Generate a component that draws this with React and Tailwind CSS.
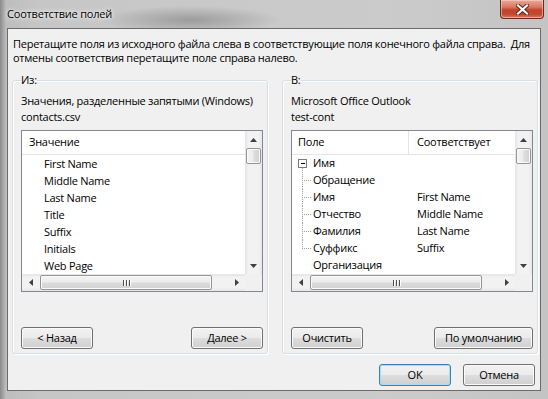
import React from "react";

function UpArrow() {
  return (
    <svg width="7" height="4" viewBox="0 0 7 4"><path d="M0 4 L3.5 0 L7 4 Z" fill="#404040" /></svg>
  );
}
function DownArrow() {
  return (
    <svg width="7" height="4" viewBox="0 0 7 4"><path d="M0 0 L3.5 4 L7 0 Z" fill="#404040" /></svg>
  );
}
function LeftArrow() {
  return (
    <svg width="4" height="7" viewBox="0 0 4 7"><path d="M4 0 L0 3.5 L4 7 Z" fill="#404040" /></svg>
  );
}
function RightArrow() {
  return (
    <svg width="4" height="7" viewBox="0 0 4 7"><path d="M0 0 L4 3.5 L0 7 Z" fill="#404040" /></svg>
  );
}

function VScroll() {
  return (
    <div className="flex flex-col bg-[linear-gradient(90deg,#e4e4e4,#f2f2f2_20%,#f2f2f2_80%,#e6e6e6)]">
      <div className="h-[17px] flex items-center justify-center"><UpArrow /></div>
      <div className="h-[16px] mx-[1px] rounded-[2px] border border-[#959595] bg-[linear-gradient(90deg,#f4f4f4,#ececec_45%,#dcdcdc_55%,#d2d2d2)] shadow-[inset_0_0_0_1px_#fafafa]" />
      <div className="flex-1" />
      <div className="h-[17px] flex items-center justify-center"><DownArrow /></div>
    </div>
  );
}

function HScroll() {
  return (
    <div className="flex bg-[linear-gradient(180deg,#e4e4e4,#f2f2f2_20%,#f2f2f2_80%,#e6e6e6)]">
      <div className="w-[17px] flex items-center justify-center"><LeftArrow /></div>
      <div className="w-[172px] my-[1px] ml-[1px] rounded-[2px] border border-[#959595] bg-[linear-gradient(180deg,#f4f4f4,#ececec_45%,#dcdcdc_55%,#d2d2d2)] shadow-[inset_0_0_0_1px_#fafafa] flex items-center justify-center gap-[2px]">
        <div className="w-[1px] h-[6px] bg-[#505050] shadow-[1px_0_0_#fff]" />
        <div className="w-[1px] h-[6px] bg-[#505050] shadow-[1px_0_0_#fff]" />
        <div className="w-[1px] h-[6px] bg-[#505050] shadow-[1px_0_0_#fff]" />
      </div>
      <div className="flex-1" />
      <div className="w-[17px] flex items-center justify-center"><RightArrow /></div>
    </div>
  );
}

function ListBox({ header, children }) {
  return (
    <div className="w-[242px] h-[162px] border border-[#828790] bg-white grid grid-cols-[1fr_17px] grid-rows-[1fr_17px] overflow-hidden">
      <div className="flex flex-col overflow-hidden min-w-0">
        <div className="h-[24px] shrink-0 flex items-center border-b border-[#e5e5e5] bg-white">{header}</div>
        <div className="flex flex-col">{children}</div>
      </div>
      <VScroll />
      <HScroll />
      <div className="bg-[#f0f0f0]" />
    </div>
  );
}

const btnBase =
  "h-[22px] flex items-center justify-center rounded-[3px] border bg-[linear-gradient(180deg,#f2f2f2,#ebebeb_48%,#dddddd_52%,#cfcfcf)] text-black";

function Btn({ children, className, def }) {
  return (
    <div
      className={
        btnBase +
        " " +
        (def ? "border-[#3c7fb1] shadow-[inset_0_0_0_1px_#a8ddf3]" : "border-[#707070] shadow-[inset_0_0_0_1px_#fbfbfb]") +
        " " +
        className
      }
    >
      {children}
    </div>
  );
}

function Gutter({ kind }) {
  const dot = { stroke: "#a0a0a0", strokeWidth: 1, strokeDasharray: "1 1", shapeRendering: "crispEdges" };
  return (
    <svg width="21" height="17" viewBox="0 0 21 17" className="shrink-0">
      {kind === "root" && (
        <>
          <rect x="6.5" y="4.5" width="8" height="8" fill="#fff" stroke="#7b7b7b" shapeRendering="crispEdges" />
          <line x1="8.5" y1="8.5" x2="13" y2="8.5" stroke="#000" shapeRendering="crispEdges" />
          <line x1="10.5" y1="13" x2="10.5" y2="17" {...dot} />
        </>
      )}
      {kind === "mid" && (
        <>
          <line x1="10.5" y1="0" x2="10.5" y2="17" {...dot} />
          <line x1="12" y1="8.5" x2="20" y2="8.5" {...dot} />
        </>
      )}
      {kind === "last" && (
        <>
          <line x1="10.5" y1="0" x2="10.5" y2="9" {...dot} />
          <line x1="12" y1="8.5" x2="20" y2="8.5" {...dot} />
        </>
      )}
    </svg>
  );
}

const leftItems = ["First Name", "Middle Name", "Last Name", "Title", "Suffix", "Initials", "Web Page"];
const rightItems = [
  ["root", "Имя", ""],
  ["mid", "Обращение", ""],
  ["mid", "Имя", "First Name"],
  ["mid", "Отчество", "Middle Name"],
  ["mid", "Фамилия", "Last Name"],
  ["last", "Суффикс", "Suffix"],
  ["none", "Организация", ""],
];

export default function App() {
  return (
    <div className="w-[548px] h-[399px] flex flex-col px-[7px] pb-[8px] relative overflow-hidden font-['Open_Sans',sans-serif] text-[11px] tracking-[-0.25px] text-black bg-[radial-gradient(ellipse_90px_14px_at_190px_20px,#9c9c9c,transparent),linear-gradient(90deg,#8a8a8a_0px,#bdbdbd_6px,#c6c6c6_40px,#cbcbcb_70%,#c4c4c4)]">
      <div className="h-[28px] shrink-0 flex items-center tracking-[-0.2px] [text-shadow:0_0_6px_#fff,0_0_3px_#fff]">Соответствие полей</div>

      <div className="absolute top-0 right-[4px] w-[44px] h-[19px] rounded-b-[4px] border border-t-0 border-[#6a2a1f] bg-[linear-gradient(180deg,#e9aa9c,#d9765f_40%,#c5422a_55%,#c14a30_80%,#d98062)] shadow-[inset_0_0_0_1px_rgba(255,220,210,0.5)] flex items-center justify-center">
        <svg width="13" height="11" viewBox="0 0 13 11">
          <path d="M2 1.5 L11 9.5 M11 1.5 L2 9.5" stroke="#5a2219" strokeWidth="4" strokeLinecap="square" />
          <path d="M2 1.5 L11 9.5 M11 1.5 L2 9.5" stroke="#fff" strokeWidth="2.2" strokeLinecap="square" />
        </svg>
      </div>

      <div className="flex-1 border border-[#6b6b6b] bg-[#f0f0f0] flex flex-col pt-[8px] pl-[4px] pr-[2px]">
        <div className="leading-[14px] pl-[1px] whitespace-nowrap">
          Перетащите поля из исходного файла слева в соответствующие поля конечного файла справа.&nbsp; Для
          <br />
          отмены соответствия перетащите поле справа налево.
        </div>

        <div className="flex gap-[14px] mt-[7px]">
          <fieldset className="w-[256px] min-w-0 border border-[#d5dfe5] rounded-[3px] pl-[8px] pr-[4px] pb-[4px] shadow-[inset_1px_1px_0_#fff,1px_1px_0_#fff]">
            <legend className="leading-[16px] px-0">Из:</legend>
            <div className="mt-[5px] leading-[16px] whitespace-nowrap">Значения, разделенные запятыми (Windows)</div>
            <div className="leading-[16px]">contacts.csv</div>
            <div className="mt-[5px]">
              <ListBox header={<span className="pl-[7px]">Значение</span>}>
                {leftItems.map((t) => (
                  <div key={t} className="h-[17px] leading-[17px] pl-[22px] whitespace-nowrap">{t}</div>
                ))}
              </ListBox>
            </div>
            <div className="mt-[35px] flex justify-between w-[242px]">
              <Btn className="w-[72px]">&lt; Назад</Btn>
              <Btn className="w-[72px]">Далее &gt;</Btn>
            </div>
          </fieldset>

          <fieldset className="w-[256px] min-w-0 border border-[#d5dfe5] rounded-[3px] pl-[8px] pr-[4px] pb-[4px] shadow-[inset_1px_1px_0_#fff,1px_1px_0_#fff]">
            <legend className="leading-[16px] px-0">В:</legend>
            <div className="mt-[5px] leading-[16px] whitespace-nowrap">Microsoft Office Outlook</div>
            <div className="leading-[16px]">test-cont</div>
            <div className="mt-[5px]">
              <ListBox
                header={
                  <div className="flex h-full items-center w-full">
                    <div className="w-[117px] h-full flex items-center pl-[6px] border-r border-[#e5e5e5]">Поле</div>
                    <div className="pl-[8px] whitespace-nowrap">Соответствует</div>
                  </div>
                }
              >
                {rightItems.map(([k, a, b], i) => (
                  <div key={i} className="h-[17px] flex items-center">
                    <div className="w-[118px] flex items-center shrink-0">
                      <Gutter kind={k} />
                      <span className="whitespace-nowrap">{a}</span>
                    </div>
                    <span className="pl-[7px] whitespace-nowrap">{b}</span>
                  </div>
                ))}
              </ListBox>
            </div>
            <div className="mt-[35px] flex justify-between w-[242px]">
              <Btn className="w-[72px]">Очистить</Btn>
              <Btn className="w-[99px]">По умолчанию</Btn>
            </div>
          </fieldset>
        </div>

        <div className="mt-[10px] flex justify-end gap-[12px] pr-[3px]">
          <Btn className="w-[72px]" def>OK</Btn>
          <Btn className="w-[72px]">Отмена</Btn>
        </div>
      </div>
    </div>
  );
}
